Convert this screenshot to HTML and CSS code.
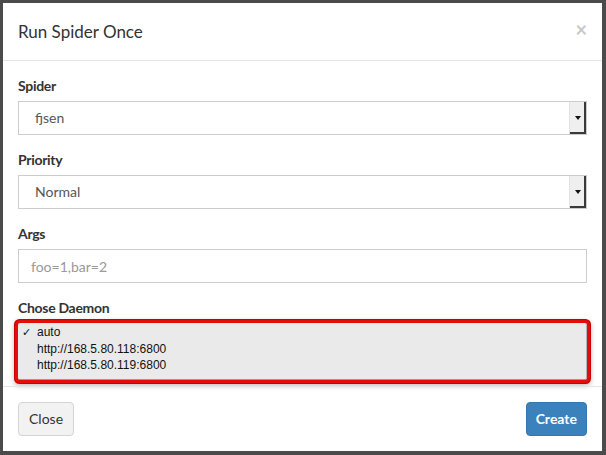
FILE: index.html
```html
<!DOCTYPE html>
<html>
<head>
<meta charset="utf-8">
<link rel="stylesheet" href="styles.css">
</head>
<body>
<div class="modal">
  <div class="modal-header">
    <h4 class="modal-title">Run Spider Once</h4>
    <span class="close">&times;</span>
  </div>
  <div class="modal-body">
    <div class="form-group">
      <label class="label">Spider</label>
      <div class="select"><span class="select-text">fjsen</span><span class="select-arrow"><i class="tri"></i></span></div>
    </div>
    <div class="form-group">
      <label class="label">Priority</label>
      <div class="select"><span class="select-text">Normal</span><span class="select-arrow"><i class="tri"></i></span></div>
    </div>
    <div class="form-group">
      <label class="label">Args</label>
      <div class="input"><span class="placeholder">foo=1,bar=2</span></div>
    </div>
    <div class="form-group last">
      <label class="label">Chose Daemon</label>
      <div class="listbox">
        <div class="option"><span class="check">✓</span>auto</div>
        <div class="option"><span class="check"></span>http://168.5.80.118:6800</div>
        <div class="option"><span class="check"></span>http://168.5.80.119:6800</div>
      </div>
    </div>
  </div>
  <div class="modal-footer">
    <button class="btn btn-default">Close</button>
    <button class="btn btn-primary">Create</button>
  </div>
</div>
</body>
</html>
```

FILE: styles.css
```css
html, body {
  margin: 0;
  padding: 0;
}
body {
  background: #4b4b4b;
  padding: 3px 4px 4px 3px;
  font-family: Lato, "Open Sans", sans-serif;
  color: #333;
  font-size: 14px;
  box-sizing: border-box;
  height: 455px;
  overflow: hidden;
}
.modal {
  background: #fff;
  height: 448px;
  box-sizing: border-box;
  display: flex;
  flex-direction: column;
}
.modal-header {
  display: flex;
  justify-content: space-between;
  align-items: flex-start;
  padding: 16px 15px 15px 15px;
  border-bottom: 1px solid #e5e5e5;
  height: 58px;
  box-sizing: border-box;
}
.modal-title {
  margin: 0;
  font-size: 17px;
  font-weight: 400;
  line-height: 26px;
  color: #333;
}
.close {
  font-size: 20px;
  font-weight: 700;
  color: #c8c8c8;
  line-height: 20px;
  margin-top: 0;
}
.modal-body {
  padding: 15px 15px 0 15px;
  flex: 1;
}
.form-group {
  margin-bottom: 15px;
}
.form-group.last {
  margin-bottom: 0;
}
.label {
  display: block;
  font-weight: 700;
  font-size: 14px;
  letter-spacing: -0.3px;
  line-height: 20px;
  margin-bottom: 5px;
  color: #333;
}
.select {
  display: flex;
  height: 34px;
  box-sizing: border-box;
  border: 1px solid #ccc;
  background: #fff;
}
.select-text {
  flex: 1;
  padding-left: 16px;
  line-height: 31px;
  color: #555;
  font-size: 14px;
}
.select-arrow {
  width: 14px;
  background: #efefef;
  border-left: 1px solid #e2e2e2;
  box-shadow: inset -2px -2px 0 #3a3a3a;
  display: flex;
  align-items: center;
  justify-content: center;
  padding-right: 2px;
}
.tri {
  display: block;
  width: 0;
  height: 0;
  border-left: 3px solid transparent;
  border-right: 3px solid transparent;
  border-top: 4px solid #111;
  margin-left: 1px;
}
.input {
  height: 34px;
  box-sizing: border-box;
  border: 1px solid #ccc;
  padding: 0 12px;
  display: flex;
  align-items: center;
}
.placeholder {
  color: #999;
  font-size: 14px;
}
.listbox {
  height: 57px;
  box-sizing: border-box;
  background: #eaeaea;
  border-right: 1px solid #b5b5b5;
  border-bottom: 1px solid #9a9a9a;
  padding-top: 1px;
  font-family: "Liberation Sans", Arial, sans-serif;
  font-size: 12px;
  color: #111;
  border-radius: 2px;
  box-shadow: 0 0 0 3px #e40c0c, 0 0 0 4px #c80000, 0 2px 5px 4px rgba(0,0,0,0.25);
}
.option {
  display: flex;
  line-height: 16.5px;
  height: 16.5px;
}
.check {
  width: 19px;
  padding-left: 4px;
  box-sizing: border-box;
  font-size: 11px;
}
.modal-footer {
  border-top: 1px solid #e5e5e5;
  padding: 15px;
  display: flex;
  justify-content: space-between;
  margin-top: 4px;
}
.btn {
  font-family: Lato, "Open Sans", sans-serif;
  font-size: 14px;
  height: 34px;
  padding: 0 10px;
  border-radius: 4px;
  border: 1px solid #ccc;
  line-height: 32px;
}
.btn-default {
  background: #f2f2f2;
  color: #333;
  border-color: #d4d4d4;
}
.btn-primary {
  background: #3b82bd;
  border-color: #3677ad;
  color: #fff;
  font-weight: 700;
  padding: 0 9px;
}
```
